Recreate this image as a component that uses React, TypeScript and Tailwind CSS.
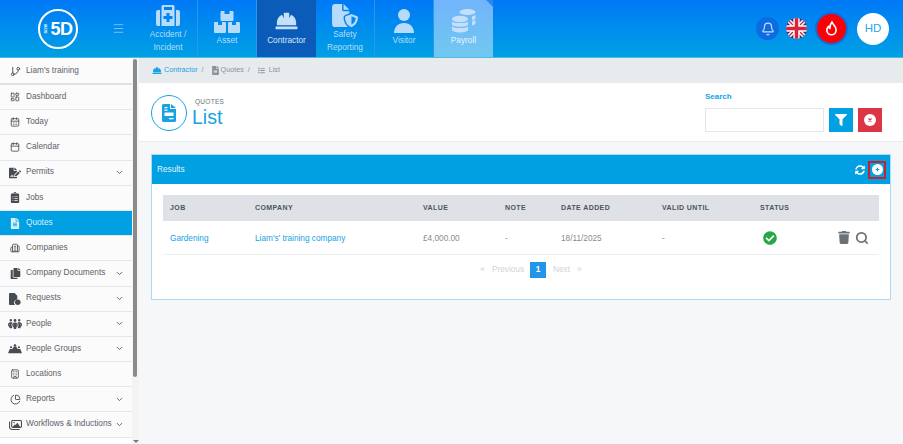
import React from 'react';
import { FaHardHat, FaFilter, FaSyncAlt, FaTrash, FaCheckCircle, FaClipboardList, FaFileAlt, FaCopy, FaFileSignature } from 'react-icons/fa';
import { FaFileShield, FaPeopleGroup, FaRegImages, FaList } from 'react-icons/fa6';
import { GitBranch, LayoutDashboard, CalendarDays, Calendar, Building2, ChartPie, ChevronDown, Building, Bell, Menu, Search } from 'lucide-react';

const MedicalCase = () => (
  <svg viewBox="0 0 24 21" className="w-[24px] h-[21px]" fill="currentColor">
    <path d="M2 5h2v16H2a2 2 0 0 1-2-2V7a2 2 0 0 1 2-2zM20 5h2a2 2 0 0 1 2 2v12a2 2 0 0 1-2 2h-2z" />
    <path
      fillRule="evenodd"
      d="M7 0h10a1.500 1.500 0 0 1 1.500 1.500V21h-13V1.500A1.500 1.500 0 0 1 7 0zM8 2v3h8V2zM10.500 8v3h-3v3h3v3h3v-3h3v-3h-3V8z"
    />
  </svg>
);

const Boxes = () => (
  <svg viewBox="0 0 26 23" className="w-[26px] h-[23px]" fill="currentColor">
    <path d="M7.500 1h3v3h5V1h3a1 1 0 0 1 1 1v8a1 1 0 0 1-1 1h-11a1 1 0 0 1-1-1V2a1 1 0 0 1 1-1z" />
    <path d="M1 12h3v3h4v-3h3a1 1 0 0 1 1 1v9a1 1 0 0 1-1 1H1a1 1 0 0 1-1-1v-9a1 1 0 0 1 1-1z" />
    <path d="M15 12h3v3h4v-3h3a1 1 0 0 1 1 1v9a1 1 0 0 1-1 1H15a1 1 0 0 1-1-1v-9a1 1 0 0 1 1-1z" />
  </svg>
);

const Visitor = () => (
  <svg viewBox="0 0 20 24" className="w-[20px] h-[24px]" fill="currentColor">
    <circle cx="10" cy="6" r="6" />
    <path d="M0 24c0-6 4-10 10-10s10 4 10 10z" />
  </svg>
);

const Coins = () => (
  <svg viewBox="0 0 24 24" className="w-[24px] h-[24px]" fill="currentColor">
    <ellipse cx="15.500" cy="3" rx="8" ry="3" />
    <path d="M20 7.500l3.500-1.500v3c0 1-1.500 2-3.500 2.400zM20 12.500l3.500-1.500v3c0 1-1.500 2-3.500 2.400z" />
    <ellipse cx="8" cy="10" rx="8" ry="3.200" />
    <path d="M0 12.500c2 2 14 2 16 0v3c0 3-16 3-16 0z" />
    <path d="M0 17.500c2 2 14 2 16 0v3c0 4-16 4-16 0z" />
  </svg>
);

const Flame = () => (
  <svg viewBox="0 0 14 16" className="w-[13px] h-[15px]" fill="none" stroke="white" strokeWidth="1.800" strokeLinejoin="round">
    <path d="M7.500 1c.5 2.500 4.500 4.500 4.500 8.500 0 3-2.300 5.200-5 5.200S2 12.500 2 9.800c0-1.800.8-3 1.800-4 .2 1.200.8 1.800 1.500 2.100C5.200 5.500 6 3 7.500 1z" />
  </svg>
);

const QuoteDoc = ({ className }: { className: string }) => (
  <svg viewBox="0 0 14 18" className={className} fill="currentColor">
    <path
      fillRule="evenodd"
      d="M1.500 0H8v5h6v11.500a1.500 1.500 0 0 1-1.500 1.500h-11A1.500 1.500 0 0 1 0 16.500v-15A1.500 1.500 0 0 1 1.500 0zM2.500 3v1.200h3V3zM2.500 5.500v1.200h3V5.500zM2.500 8.500v3.500h9V8.500zM7 14v1.200h4.500V14z"
    />
    <path d="M9 0l5 4H9z" />
  </svg>
);

const CircleMark = ({ mark }: { mark: 'plus' | 'x' }) => (
  <svg viewBox="0 0 12 12" className={mark === 'x' ? 'w-[12px] h-[12px]' : 'w-[11px] h-[11px]'}>
    <circle cx="6" cy="6" r="6" fill="white" />
    {mark === 'plus' ? (
      <path d="M6 4v4M4 6h4" stroke="#00a0e3" strokeWidth="1.200" />
    ) : (
      <path d="M4.500 4.500l3 3M7.500 4.500l-3 3" stroke="#dc3545" strokeWidth="1.200" />
    )}
  </svg>
);

const RequestsIcon = () => (
  <svg viewBox="0 0 13 13" className="w-[12px] h-[12px]" fill="currentColor">
    <path d="M1 0h5l3 3v4a3.500 3.500 0 0 0-2.500 6H1a1 1 0 0 1-1-1V1a1 1 0 0 1 1-1z" />
    <circle cx="9.500" cy="10" r="3" />
  </svg>
);

const GroupsIcon = () => (
  <svg viewBox="0 0 16 11" className="w-[14px] h-[11px]" fill="currentColor">
    <circle cx="8" cy="2" r="1.500" />
    <circle cx="3.500" cy="4" r="1.200" />
    <circle cx="12.500" cy="4" r="1.200" />
    <path d="M0 11l2-5h3l1.500-2.500h3L11 6h3l2 5z" />
  </svg>
);

const navItems = [
  { label: ['Accident /', 'Incident'], icon: <MedicalCase /> },
  { label: ['Asset'], icon: <Boxes /> },
  { label: ['Contractor'], icon: <FaHardHat className="w-[25px] h-[22px]" />, active: true },
  { label: ['Safety', 'Reporting'], icon: <FaFileShield className="w-[26px] h-[23px]" /> },
  { label: ['Visitor'], icon: <Visitor /> },
  { label: ['Payroll'], icon: <Coins />, faded: true },
];

const sideItems = [
  { label: "Liam's training", icon: <GitBranch className="w-[11px] h-[11px]" />, first: true },
  { label: 'Dashboard', icon: <LayoutDashboard className="w-[10px] h-[10px]" /> },
  { label: 'Today', icon: <CalendarDays className="w-[10px] h-[10px]" /> },
  { label: 'Calendar', icon: <Calendar className="w-[10px] h-[10px]" /> },
  { label: 'Permits', icon: <FaFileSignature className="w-[12px] h-[12px]" />, more: true },
  { label: 'Jobs', icon: <FaClipboardList className="w-[10px] h-[11px]" /> },
  { label: 'Quotes', icon: <FaFileAlt className="w-[10px] h-[11px]" />, active: true },
  { label: 'Companies', icon: <Building2 className="w-[10px] h-[10px]" /> },
  { label: 'Company Documents', icon: <FaCopy className="w-[11px] h-[11px]" />, more: true },
  { label: 'Requests', icon: <RequestsIcon />, more: true },
  { label: 'People', icon: <FaPeopleGroup className="w-[14px] h-[12px]" />, more: true },
  { label: 'People Groups', icon: <GroupsIcon />, more: true },
  { label: 'Locations', icon: <Building className="w-[10px] h-[10px]" /> },
  { label: 'Reports', icon: <ChartPie className="w-[11px] h-[11px]" />, more: true },
  { label: 'Workflows & Inductions', icon: <FaRegImages className="w-[13px] h-[12px]" />, more: true },
];

const columns = [
  { title: 'JOB', width: 'w-[85px]' },
  { title: 'COMPANY', width: 'w-[168px]' },
  { title: 'VALUE', width: 'w-[82px]' },
  { title: 'NOTE', width: 'w-[56px]' },
  { title: 'DATE ADDED', width: 'w-[101px]' },
  { title: 'VALID UNTIL', width: 'w-[98px]' },
  { title: 'STATUS', width: 'w-[100px]' },
];

const UkFlag = () => (
  <svg viewBox="0 0 60 60" className="w-[21px] h-[21px] rounded-full">
    <rect width="60" height="60" fill="#2b3a74" />
    <path d="M0 0L60 60M60 0L0 60" stroke="#fff" strokeWidth="12" />
    <path d="M0 0L60 60M60 0L0 60" stroke="#d8253f" strokeWidth="4" />
    <path d="M30 0V60M0 30H60" stroke="#fff" strokeWidth="18" />
    <path d="M30 0V60M0 30H60" stroke="#d8253f" strokeWidth="10" />
  </svg>
);

const Logo = () => (
  <div className="w-[40px] h-[40px] rounded-full border-2 border-white flex items-center justify-center text-white">
    <span className="text-[4px] font-bold [writing-mode:vertical-rl] rotate-180 mr-[1px]">SGW</span>
    <span className="text-[18px] font-bold leading-none tracking-[-0.5px]">5D</span>
  </div>
);

const App: React.FC = () => {
  return (
    <div className="w-[903px] h-[444px] overflow-hidden flex flex-col bg-[#f6f7f9] font-['Liberation_Sans',Arial,sans-serif]">
      <header className="h-[58px] shrink-0 flex bg-gradient-to-b from-[#0078f7] to-[#00a0e3] border-b border-[#4db8ea]">
        <div className="w-[139px] shrink-0 flex items-center">
          <div className="ml-[38px]"><Logo /></div>
          <Menu className="ml-[34px] w-[13px] h-[13px] text-[#7cc0f5]" strokeWidth={1.8} />
        </div>
        <nav className="flex">
          {navItems.map((item) => (
            <div
              key={item.label[0]}
              className={`relative w-[59px] flex flex-col items-center text-[8.3px] leading-[13px] border-r border-[#2a97ef] ${
                item.label.length === 1 ? 'pt-[9px]' : 'pt-[4px]'
              } ${
                item.active ? 'bg-[#0a5cb8] text-[#d5e7f8] border-r-0' : item.faded ? 'bg-gradient-to-b from-[#72b4fb] to-[#70c8f0] text-[#e6f4fd] border-r-0' : 'text-[#b4dcfb]'
              }`}
            >
              {item.faded && (
                <span className="absolute top-0 right-0 w-0 h-0 border-t-[7px] border-l-[7px] border-t-[#2e86ee] border-l-transparent" />
              )}
              <div className={`flex items-center justify-center ${item.label.length === 1 ? 'h-[24px]' : 'h-[23px]'} ${item.active || item.faded ? 'text-[#c4e0fa]' : 'text-[#b7dcfb]'}`}>
                {item.icon}
              </div>
              <div className="text-center mt-[1px]">
                {item.label.map((l) => <div key={l}>{l}</div>)}
              </div>
            </div>
          ))}
        </nav>
        <div className="ml-auto flex items-center pr-[14px]">
          <div className="w-[23px] h-[23px] rounded-full bg-[#0f6ce0] flex items-center justify-center">
            <Bell className="w-[14px] h-[14px] text-[#c0dffb]" strokeWidth={2} />
          </div>
          <div className="ml-[7px]"><UkFlag /></div>
          <div className="ml-[10px] w-[29px] h-[29px] rounded-full bg-[#fb0007] ring-2 ring-[#0f6ce0] flex items-center justify-center">
            <Flame />
          </div>
          <div className="ml-[11px] w-[32px] h-[32px] rounded-full bg-white flex items-center justify-center text-[11.5px] text-[#2aa3ea]">HD</div>
        </div>
      </header>

      <div className="flex flex-1 min-h-0">
        <aside className="w-[139px] shrink-0 flex bg-white">
          <div className="w-[132px] shrink-0 flex flex-col">
            {sideItems.map((item) => (
              <div
                key={item.label}
                className={`shrink-0 flex items-center text-[8.25px] ${
                  item.first ? 'h-[27px] pt-[1px] border-b-2 border-[#dfe1e4]' : 'h-[25.2px] border-b border-[#e4e6e9]'
                } ${item.active ? 'bg-[#00a0e3] text-[#d8f0fb]' : 'bg-[#fbfbfc] text-[#5c6268]'}`}
              >
                <span className={`w-[26px] flex justify-center pl-[4px] ${item.active ? 'text-[#d8f0fb]' : 'text-[#464c52]'}`}>{item.icon}</span>
                <span className="whitespace-nowrap">{item.label}</span>
                {item.more && <ChevronDown className="ml-auto mr-[8px] w-[9px] h-[9px] text-[#5c6268]" strokeWidth={2.5} />}
              </div>
            ))}
          </div>
          <div className="w-[7px] relative bg-[#f4f4f5]">
            <div className="ml-[1px] mt-[1px] w-[4px] h-[318px] rounded-full bg-[#8a8a8a]" />
            <span className="absolute bottom-[1px] left-[1px] w-0 h-0 border-x-[3px] border-t-[3px] border-x-transparent border-t-[#7a7a7a]" />
          </div>
        </aside>

        <main className="flex-1 min-w-0 flex flex-col">
          <div className="h-[25px] shrink-0 bg-[#e8ebed] flex items-center pl-[13px] text-[7.2px] text-[#8b9298]">
            <FaHardHat className="w-[10px] h-[9px] text-[#17a2e4]" />
            <span className="ml-[2px] text-[#17a2e4]">Contractor</span>
            <span className="ml-[4px]">/</span>
            <FaFileAlt className="ml-[8px] w-[7px] h-[9px]" />
            <span className="ml-[2px]">Quotes</span>
            <span className="ml-[4px]">/</span>
            <FaList className="ml-[8px] w-[7px] h-[7px]" />
            <span className="ml-[4px]">List</span>
          </div>

          <div className="h-[59px] shrink-0 bg-white border-b border-[#e9ebee] flex items-center pl-[12px] pr-[21px]">
            <div className="w-[36px] h-[36px] mt-[1px] rounded-full border border-[#17a2e4] flex items-center justify-center">
              <QuoteDoc className="w-[14px] h-[18px] text-[#17a2e4]" />
            </div>
            <div className="ml-[6px]">
              <div className="text-[6.5px] tracking-[0.3px] text-[#6b7177] leading-[8px] pl-[2px]">QUOTES</div>
              <div className="text-[19.5px] leading-[20px] mt-[1px] ml-[-1px] text-[#17a2e4]">List</div>
            </div>
            <div className="ml-auto">
              <div className="text-[8px] font-bold text-[#17a2e4] leading-[10px] mb-[6px]">Search</div>
              <div className="flex items-center">
                <div className="w-[119px] h-[24px] bg-white border border-[#e4e6e9]" />
                <button className="ml-[5px] w-[24px] h-[24px] bg-[#00a0e3] flex items-center justify-center">
                  <FaFilter className="w-[12px] h-[12px] text-white" />
                </button>
                <button className="ml-[5px] w-[24px] h-[24px] bg-[#dc3545] flex items-center justify-center">
                  <CircleMark mark="x" />
                </button>
              </div>
            </div>
          </div>

          <section className="mt-[12px] ml-[12px] w-[740px] h-[146px] bg-white border border-[#a9dcf4] flex flex-col">
            <div className="h-[29px] shrink-0 bg-[#00a0e3] flex items-center pl-[5px] pr-[4px] text-[8.25px] text-[#e2f4fc]">
              <span className="mt-[1px]">Results</span>
              <FaSyncAlt className="ml-auto w-[10px] h-[10px] text-white" />
              <span className="ml-[3px] w-[18px] h-[18px] bg-[#00a0e3] border-[2px] border-[#c8202c] flex items-center justify-center">
                <CircleMark mark="plus" />
              </span>
            </div>
            <div className="px-[11px] pt-[11px]">
              <div className="h-[26px] bg-[#dee1e5] flex items-center pl-[7px] text-[7px] font-bold tracking-[0.4px] text-[#4f555b]">
                {columns.map((c) => <div key={c.title} className={`${c.width} shrink-0`}>{c.title}</div>)}
              </div>
              <div className="h-[34px] flex items-center pl-[7px] border-b border-[#eceef0] text-[8.25px] text-[#868c92]">
                <div className="w-[85px] mt-[3px] text-[#17a2e4]">Gardening</div>
                <div className="w-[168px] mt-[3px] text-[#17a2e4]">Liam's' training company</div>
                <div className="w-[82px] mt-[3px]">£4,000.00</div>
                <div className="w-[56px] mt-[3px]">-</div>
                <div className="w-[101px] mt-[3px]">18/11/2025</div>
                <div className="w-[98px] mt-[3px]">-</div>
                <div className="w-[78px] pl-[3px]"><FaCheckCircle className="w-[14px] h-[14px] text-[#28a745]" /></div>
                <FaTrash className="w-[12px] h-[13px] text-[#6c7178]" />
                <Search className="ml-[5px] w-[14px] h-[14px] text-[#6c7178]" strokeWidth={3} />
              </div>
              <div className="flex items-center justify-center pl-[20px] mt-[7px] text-[8.25px] text-[#d0d3d6]">
                <span>«</span>
                <span className="ml-[7px]">Previous</span>
                <span className="ml-[6px] w-[16px] h-[16px] bg-[#2196e8] text-white font-bold flex items-center justify-center">1</span>
                <span className="ml-[7px]">Next</span>
                <span className="ml-[7px]">»</span>
              </div>
            </div>
          </section>
        </main>
      </div>
    </div>
  );
};

export default App;
